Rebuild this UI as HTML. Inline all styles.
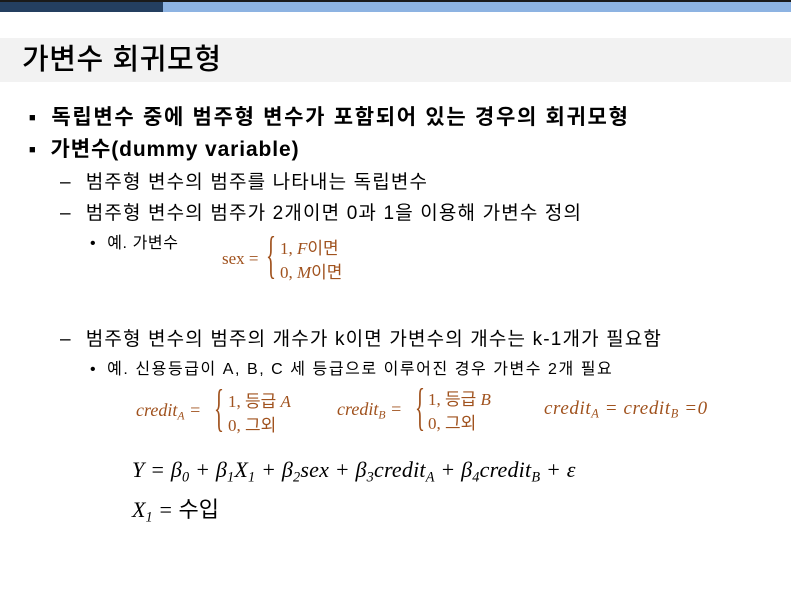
<!DOCTYPE html>
<html><head><meta charset="utf-8"><style>
body{margin:0;width:791px;height:604px;background:#fff;position:relative;overflow:hidden;font-family:"Liberation Sans","Noto Sans CJK KR",sans-serif;color:#000}
.a{position:absolute;white-space:nowrap}
.m{font-family:"Liberation Serif","Noto Sans CJK KR",serif;color:#a0521e}
.i{font-style:italic}
.k{font-family:"Noto Sans CJK KR",sans-serif;font-style:normal}
sub{font-size:65%;vertical-align:-0.3em}
</style></head><body>
<div class="a" style="left:0;top:0;width:791px;height:2px;background:#1a1a1a"></div>
<div class="a" style="left:0;top:2px;width:163px;height:10px;background:#243f60"></div>
<div class="a" style="left:163px;top:2px;width:628px;height:10px;background:#8db3e2"></div>
<div class="a" style="left:0;top:38px;width:791px;height:44px;background:#f2f2f2"></div>
<div class="a" style="left:22px;top:40px;font-size:29px;line-height:40px;letter-spacing:0.6px;font-weight:500">가변수 회귀모형</div>

<div class="a" style="left:29px;top:102px;font-size:21px;line-height:32px;font-weight:bold;letter-spacing:1.7px"><span style="font-size:11px;vertical-align:3px">■</span><span style="margin-left:14px">독립변수 중에 범주형 변수가 포함되어 있는 경우의 회귀모형</span></div>
<div class="a" style="left:29px;top:134px;font-size:21px;line-height:32px;font-weight:bold;letter-spacing:0.9px"><span style="font-size:11px;vertical-align:3px">■</span><span style="margin-left:14px">가변수(dummy variable)</span></div>
<div class="a" style="left:60px;top:170px;font-size:19px;line-height:26px;letter-spacing:1.15px">–<span style="margin-left:14px">범주형 변수의 범주를 나타내는 독립변수</span></div>
<div class="a" style="left:60px;top:201px;font-size:19px;line-height:26px;letter-spacing:1.15px">–<span style="margin-left:14px">범주형 변수의 범주가 2개이면 0과 1을 이용해 가변수 정의</span></div>
<div class="a" style="left:90px;top:233px;font-size:16px;line-height:22px;letter-spacing:0.6px">•<span style="margin-left:11px">예. 가변수</span></div>

<div class="a m" style="left:222px;top:249px;font-size:17px;line-height:20px">sex =</div>
<div class="a m" style="left:266px;top:228px;font-size:52px;line-height:56px;font-weight:100;transform:scaleX(.4);transform-origin:left">{</div>
<div class="a m" style="left:280px;top:236px;font-size:17px;line-height:22px">1, <span class="i">F</span><span class="k">이면</span><br>0, <span class="i">M</span><span class="k">이면</span></div>

<div class="a" style="left:60px;top:327px;font-size:19px;line-height:26px;letter-spacing:1.15px">–<span style="margin-left:14px">범주형 변수의 범주의 개수가 k이면 가변수의 개수는 k-1개가 필요함</span></div>
<div class="a" style="left:90px;top:359px;font-size:16px;line-height:22px;letter-spacing:1.55px">•<span style="margin-left:10px">예. 신용등급이 A, B, C 세 등급으로 이루어진 경우 가변수 2개 필요</span></div>

<div class="a m i" style="left:136px;top:400px;font-size:18px;line-height:20px">credit<sub>A</sub> =</div>
<div class="a m" style="left:214px;top:381px;font-size:52px;line-height:56px;font-weight:100;transform:scaleX(.4);transform-origin:left">{</div>
<div class="a m" style="left:228px;top:389px;font-size:17px;line-height:22px">1, <span class="k">등급</span> <span class="i">A</span><br>0, <span class="k">그외</span></div>

<div class="a m i" style="left:337px;top:399px;font-size:18px;line-height:20px">credit<sub>B</sub> =</div>
<div class="a m" style="left:415px;top:380px;font-size:52px;line-height:56px;font-weight:100;transform:scaleX(.4);transform-origin:left">{</div>
<div class="a m" style="left:428px;top:387px;font-size:17px;line-height:22px">1, <span class="k">등급</span> <span class="i">B</span><br>0, <span class="k">그외</span></div>

<div class="a m i" style="left:544px;top:399px;font-size:19px;line-height:20px;letter-spacing:0.6px">credit<sub>A</sub> = credit<sub>B</sub> =0</div>

<div class="a i" style="left:132px;top:457px;font-family:'Liberation Serif',serif;font-size:22px;line-height:26px;letter-spacing:0.2px">Y = β<sub>0</sub> + β<sub>1</sub>X<sub>1</sub> + β<sub>2</sub>sex + β<sub>3</sub>credit<sub>A</sub> + β<sub>4</sub>credit<sub>B</sub> + ε</div>
<div class="a i" style="left:132px;top:495px;font-family:'Liberation Serif',serif;font-size:22px;line-height:26px">X<sub>1</sub> = <span class="k">수입</span></div>
</body></html>
